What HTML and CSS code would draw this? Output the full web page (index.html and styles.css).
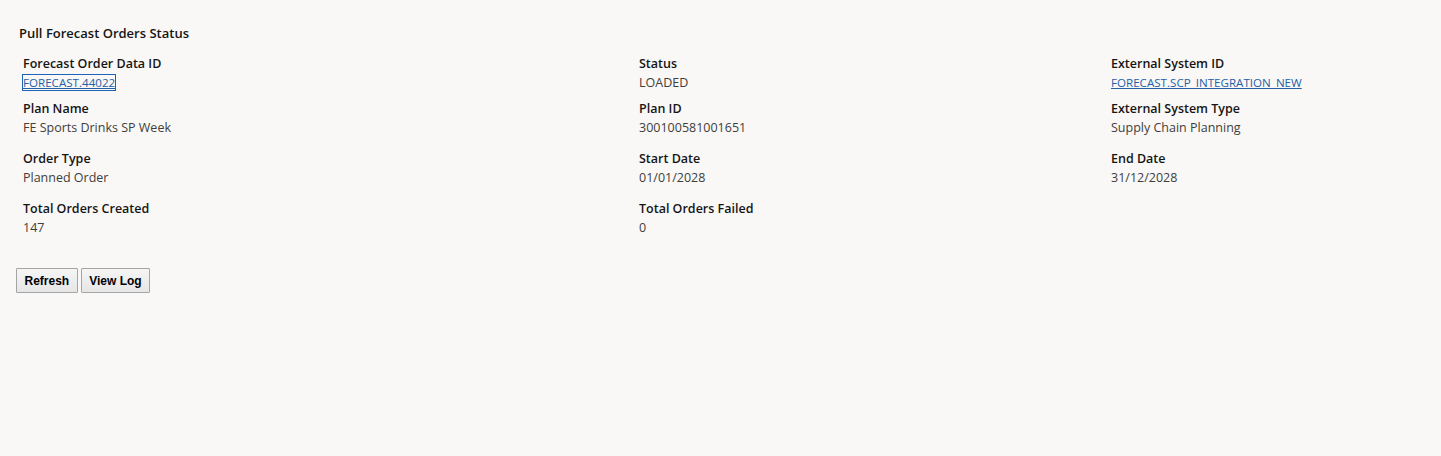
FILE: index.html
```html
<!DOCTYPE html>
<html>
<head>
<meta charset="utf-8">
<link rel="stylesheet" href="styles.css">
</head>
<body>
<div class="page">
  <h1 class="title">Pull Forecast Orders Status</h1>
  <div class="grid">
    <div class="field"><div class="label">Forecast Order Data ID</div><div class="value"><a href="#" class="link focused">FORECAST.44022</a></div></div>
    <div class="field"><div class="label">Status</div><div class="value">LOADED</div></div>
    <div class="field"><div class="label">External System ID</div><div class="value"><a href="#" class="link">FORECAST.SCP_INTEGRATION_NEW</a></div></div>

    <div class="field"><div class="label">Plan Name</div><div class="value">FE Sports Drinks SP Week</div></div>
    <div class="field"><div class="label">Plan ID</div><div class="value">300100581001651</div></div>
    <div class="field"><div class="label">External System Type</div><div class="value">Supply Chain Planning</div></div>

    <div class="field"><div class="label">Order Type</div><div class="value">Planned Order</div></div>
    <div class="field"><div class="label">Start Date</div><div class="value">01/01/2028</div></div>
    <div class="field"><div class="label">End Date</div><div class="value">31/12/2028</div></div>

    <div class="field"><div class="label">Total Orders Created</div><div class="value">147</div></div>
    <div class="field"><div class="label">Total Orders Failed</div><div class="value">0</div></div>
    <div class="field"></div>
  </div>
  <div class="actions">
    <button class="btn">Refresh</button>
    <button class="btn">View Log</button>
  </div>
</div>
</body>
</html>
```

FILE: styles.css
```css
html, body {
  margin: 0;
  padding: 0;
  background: #f9f8f7;
}
body {
  font-family: "Open Sans", "Noto Sans", "Liberation Sans", sans-serif;
  color: #161513;
}
.page {
  padding: 24px 0 0 19px;
}
.title {
  margin: 0;
  font-size: 13px;
  font-weight: 600;
  line-height: 18px;
}
.grid {
  display: grid;
  grid-template-columns: 616px 472px 1fr;
  padding-left: 4px;
  margin-top: 13px;
}
.field {
  height: 50px;
}
.field:nth-child(-n+3) {
  height: 45px;
}
.label {
  font-size: 12.5px;
  font-weight: 600;
  line-height: 18px;
}
.value {
  font-size: 12.5px;
  line-height: 18px;
  margin-top: 1px;
  color: #3f3e3b;
}
.link {
  color: #2561a5;
  text-decoration: underline;
  font-size: 11.6px;
}
.link.focused {
  outline: 1px solid #1e63b5;
  outline-offset: 0;
}
.actions {
  display: flex;
  gap: 3px;
  margin-top: 18px;
  margin-left: -3px;
}
.btn {
  font-family: "Liberation Sans", Arial, sans-serif;
  font-size: 12px;
  font-weight: bold;
  color: #000;
  height: 25px;
  padding: 0 7.5px;
  border: 1px solid #a5a5a5;
  border-radius: 1px;
  background: linear-gradient(#f5f5f5, #e6e6e6);
}
```
